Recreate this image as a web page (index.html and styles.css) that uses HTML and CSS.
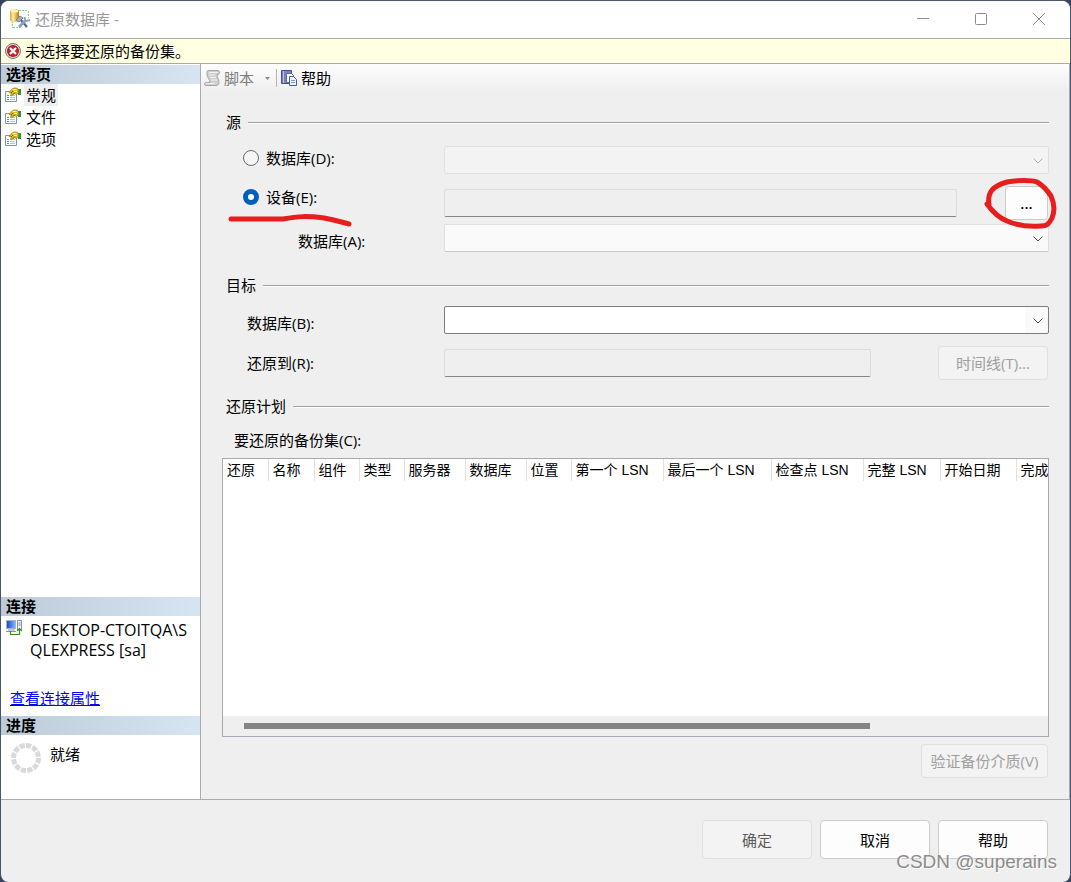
FILE: index.html
```html
<!DOCTYPE html>
<html lang="zh-CN">
<head>
<meta charset="utf-8">
<meta name="viewport" content="width=device-width, initial-scale=1">
<title>还原数据库 -</title>
<link rel="stylesheet" href="styles.css">
</head>
<body>
<svg class="defs" aria-hidden="true">
  <linearGradient id="gold" x1="0" x2="1"><stop offset="0" stop-color="#dca32a"/><stop offset=".35" stop-color="#fff0a4"/><stop offset="1" stop-color="#b87b08"/></linearGradient>
  <linearGradient id="screen" x1="0" x2="1"><stop offset="0" stop-color="#1546c8"/><stop offset="1" stop-color="#7db8ff"/></linearGradient>
  <radialGradient id="alarm"><stop offset="0" stop-color="#e0404a"/><stop offset="1" stop-color="#b4141e"/></radialGradient>
  <symbol id="page" viewBox="0 0 16 16">
    <path d="M.5 4.500h11v10H.5z" fill="#fafcff" stroke="#8594b0"/>
    <path d="M2 8.500h2M2 10.500h2M2 12.500h2" stroke="#5f86d0"/>
    <path d="M5 8.500h5M5 10.500h5M5 12.500h5" stroke="#b4c3de"/>
    <path d="M13 2h3v6h-3z" fill="#2f9a35"/>
    <path d="M4 5.500 7 2l2-1h3l1.500 1.500v3l-2 2-2-1-3 2.500-1-1 1-2z" fill="#e3b823" stroke="#8a6b18" stroke-width=".6"/>
    <path d="M7.500 2.500h4M9 4.500h3" stroke="#fff3ac"/>
    <path d="M6 6l2-2M8 7.500l2-2" stroke="#5f4a10" stroke-width=".8"/>
  </symbol>
</svg>
<div class="window">
  <header class="titlebar">
    <svg class="app-icon" width="22" height="20" viewBox="0 0 22 20" aria-hidden="true">
      <path d="M10 1.500h9M19.500 2v7M3.500 12v7M4 18.500h7" fill="none" stroke="#7fdc7f" stroke-dasharray="2 1"/>
      <path d="M1 2c0-2.500 9-2.500 9 0v9c0 2.500-9 2.500-9 0z" fill="url(#gold)"/>
      <ellipse cx="5.500" cy="2" rx="4" ry="1.500" fill="#fff1b0"/>
      <path d="M11 10l7 8" stroke="#5d6b84" stroke-width="2.400"/>
      <path d="M17 11l-7 7" stroke="#8da0bf" stroke-width="2.800"/>
      <path d="M7 11l4-4 3 2-4 4z" fill="#a4b1c5" stroke="#66758e" stroke-width=".8"/>
      <path d="M16 11l-.5-3M17 12l4-1" stroke="#8da0bd" stroke-width="2"/>
    </svg>
    <h1 class="title">还原数据库 -</h1>
    <div class="caption-buttons">
      <button class="caption" type="button" aria-label="最小化"><svg width="14" height="14" viewBox="0 0 14 14"><path d="M1 6.500h12"/></svg></button>
      <button class="caption" type="button" aria-label="最大化"><svg width="14" height="14" viewBox="0 0 14 14"><rect x="1.500" y="1.500" width="11" height="11" rx="1"/></svg></button>
      <button class="caption" type="button" aria-label="关闭"><svg width="14" height="14" viewBox="0 0 14 14"><path d="M1 1l12 12M13 1 1 13"/></svg></button>
    </div>
  </header>

  <div class="message" role="alert">
    <svg width="16" height="16" viewBox="0 0 16 16" aria-hidden="true">
      <circle cx="8" cy="8" r="7.500" fill="#d9d9de" stroke="#77777f"/>
      <circle cx="8" cy="8" r="6" fill="url(#alarm)"/>
      <path d="M5 5l6 6M11 5l-6 6" stroke="#fff" stroke-width="2.200"/>
    </svg>
    <span>未选择要还原的备份集。</span>
  </div>

  <div class="body">
    <aside class="sidebar">
      <h2 class="band">选择页</h2>
      <nav class="pages">
        <button class="page" type="button" aria-current="page"><svg width="16" height="16"><use href="#page"/></svg><span class="page-name current">常规</span></button>
        <button class="page" type="button"><svg width="16" height="16"><use href="#page"/></svg><span class="page-name">文件</span></button>
        <button class="page" type="button"><svg width="16" height="16"><use href="#page"/></svg><span class="page-name">选项</span></button>
      </nav>
      <h2 class="band">连接</h2>
      <div class="connection">
        <svg width="16" height="16" viewBox="0 0 16 16" aria-hidden="true">
          <rect x=".5" y=".5" width="9" height="8" fill="url(#screen)" stroke="#a9b4cc"/>
          <path d="M2 10h7M0 11.500h10" stroke="#8792a8"/>
          <rect x="11.500" y=".5" width="4" height="9" fill="#eef1f8" stroke="#8a93ac"/>
          <path d="M12.500 3h2M12.500 5h2" stroke="#7482a8"/>
          <path d="M4.500 11v3.500h9V9M11 11l2.500-2.500L16 11" fill="none" stroke="#2d9316" stroke-width="1.200"/>
        </svg>
        <p class="server">DESKTOP-CTOITQA\S<br>QLEXPRESS [sa]</p>
      </div>
      <a class="link" href="#">查看连接属性</a>
      <h2 class="band">进度</h2>
      <div class="progress">
        <svg width="30" height="30" viewBox="0 0 30 30" aria-hidden="true">
          <circle cx="15" cy="15" r="12.500" fill="none" stroke="#d9d9d9" stroke-width="5" pathLength="120" stroke-dasharray="8 2"/>
        </svg>
        <span>就绪</span>
      </div>
    </aside>

    <main class="content">
      <div class="toolbar">
        <button class="tool" type="button" disabled>
          <svg width="17" height="16" viewBox="0 0 17 16" aria-hidden="true">
            <path d="M4 .5h10c2 0 2 4 0 4h-1c0 3 2 5 2 8 0 2-1 3-3 3H2c-2 0-2-3 0-3h4c0-3-3-5-3-8 0-2 0-4 1-4z" fill="#cfcfcf" stroke="#a5a5a5"/>
            <path d="M5 2.500h9M5 5h6M6 7.500h6M7 10h6M2 13.500h9" stroke="#f0f0f0"/>
          </svg>
          <span>脚本</span>
          <svg class="caret" width="5" height="3" viewBox="0 0 5 3" aria-hidden="true"><path d="M0 0h5L2.500 3z" fill="#8a8a8a"/></svg>
        </button>
        <button class="tool tool-help" type="button">
          <svg width="16" height="16" viewBox="0 0 16 16" aria-hidden="true">
            <path d="M.5.500h10v13H.5z" fill="#7d82c4" stroke="#454a91"/>
            <path d="M2.500 1v12" stroke="#b9bce4"/>
            <path d="M5.500 3.500h5l2 2v7h-7z" fill="#fff" stroke="#5f6f92"/>
            <path d="M8.500 6.500h4l3 3v6h-7z" fill="#eef4ff" stroke="#4a6186"/>
            <path d="M10 10.500h4M10 12.500h4" stroke="#7f9cc8"/>
          </svg>
          <span>帮助</span>
        </button>
      </div>

      <form class="form" id="restore">
        <h2 class="group">源</h2>
        <div class="row row-source">
          <label class="radio"><input type="radio" name="source"><span>数据库(D):</span></label>
          <div class="combo combo-off"><select disabled aria-label="源数据库"></select><svg class="chevron" width="10" height="6" viewBox="0 0 10 6"><path d="M.5.500 5 5 9.500.500"/></svg></div>
        </div>
        <div class="row row-device">
          <label class="radio"><input type="radio" name="source" checked><span>设备(E):</span></label>
          <div class="field-line field-device">
            <input class="field" type="text" readonly aria-label="设备">
            <button class="button button-browse" type="button">...</button>
          </div>
        </div>
        <div class="row row-low">
          <label class="label label-nested" for="device-db">数据库(A):</label>
          <div class="combo combo-flat"><select id="device-db"></select><svg class="chevron" width="10" height="6" viewBox="0 0 10 6"><path d="M.5.500 5 5 9.500.500"/></svg></div>
        </div>

        <h2 class="group group-target">目标</h2>
        <div class="row row-low">
          <label class="label" for="target-db">数据库(B):</label>
          <div class="combo combo-edit"><select id="target-db"></select><svg class="chevron" width="10" height="6" viewBox="0 0 10 6"><path d="M.5.500 5 5 9.500.500"/></svg></div>
        </div>
        <div class="row row-restore">
          <label class="label" for="restore-to">还原到(R):</label>
          <div class="field-line field-restore">
            <input class="field" id="restore-to" type="text" readonly>
            <button class="button button-wide" type="button" disabled>时间线(T)...</button>
          </div>
        </div>

        <h2 class="group group-plan">还原计划</h2>
        <p class="list-label" id="sets">要还原的备份集(C):</p>
        <div class="list">
          <table class="sets" aria-labelledby="sets">
            <colgroup><col class="w45"><col class="w46"><col class="w45"><col class="w45"><col class="w61"><col class="w61"><col class="w45"><col class="w92"><col class="w108"><col class="w92"><col class="w77"><col class="w76"><col></colgroup>
            <thead><tr><th>还原</th><th>名称</th><th>组件</th><th>类型</th><th>服务器</th><th>数据库</th><th>位置</th><th>第一个 LSN</th><th>最后一个 LSN</th><th>检查点 LSN</th><th>完整 LSN</th><th>开始日期</th><th>完成</th></tr></thead>
          </table>
          <div class="scrollbar"><div class="thumb"></div></div>
        </div>
        <button class="button button-verify" type="button" disabled>验证备份介质(V)</button>
      </form>
    </main>
  </div>

  <footer class="footer">
    <button class="button button-wide button-ok" type="submit" form="restore" disabled>确定</button>
    <button class="button button-wide" type="button">取消</button>
    <button class="button button-wide" type="button">帮助</button>
  </footer>

  <svg class="mark mark-underline" width="126" height="16" viewBox="0 0 126 16" aria-hidden="true"><path d="M4 8C25 8 40 8 56 8C72 5 80 5 97 7C108 9 114 11 122 13"/></svg>
  <svg class="mark mark-circle" width="76" height="54" viewBox="0 0 76 54" aria-hidden="true"><path d="M7 28C5 15 11 9 25 5C35 3 50 3 55 5C62 9 65 13 69 19C73 28 73 34 70 41C67 47 65 49 59 49C47 50 34 48 25 44C15 40 10 34 5 27"/></svg>
  <div class="watermark">CSDN @superains</div>
</div>
</body>
</html>
```

FILE: styles.css
```css
* {
  box-sizing: border-box;
}

body {
  margin: 0;
  background: #37435c;
  color: #000;
  font: 15px/22px "Open Sans", "Noto Sans CJK SC", sans-serif;
}

h1, h2, p {
  margin: 0;
  font-size: 15px;
  font-weight: 400;
}

button, input, select {
  font: inherit;
  color: inherit;
}

.defs {
  position: absolute;
  width: 0;
  height: 0;
}

.window {
  position: relative;
  display: flex;
  flex-direction: column;
  min-height: 100vh;
  border: 1px solid #4a546b;
  border-bottom: 0;
  border-radius: 9px 9px 8px 8px;
  background: #efefef;
  overflow: hidden;
}

/* Title bar */
.titlebar {
  display: flex;
  align-items: center;
  height: 38px;
  padding: 0 2px 2px 8px;
  border-bottom: 1px solid #a9a9b1;
  background: #fff;
}

.title {
  flex: 1;
  margin-left: 4px;
  color: #979797;
}

.caption-buttons {
  display: flex;
}

.caption {
  display: flex;
  align-items: center;
  justify-content: center;
  width: 58px;
  height: 35px;
  padding: 0;
  border: 0;
  background: none;
}

.caption svg {
  fill: none;
  stroke: #8c8c8c;
}

.message {
  display: flex;
  align-items: center;
  gap: 4px;
  height: 25px;
  padding-left: 4px;
  border-bottom: 1px solid #a9a9b1;
  background: #ffffe1;
}

.body {
  flex: 1;
  display: flex;
  border-bottom: 1px solid #ababab;
}

/* Sidebar */
.sidebar {
  display: flex;
  flex-direction: column;
  width: 200px;
  padding-top: 1px;
  border-right: 1px solid #ababb3;
  background: #fff;
}

.band {
  height: 19px;
  padding-left: 5px;
  background: linear-gradient(90deg, #bdcad8, #d7e4f2);
  font-weight: 700;
  line-height: 19px;
}

.pages {
  flex: 1;
}

.page {
  display: flex;
  align-items: center;
  gap: 3px;
  height: 22px;
  padding: 0 0 0 4px;
  border: 0;
  background: none;
}

.page-name {
  padding: 0 2px;
}

.current {
  background: #efefef;
}

.connection {
  display: flex;
  gap: 8px;
  height: 71px;
  padding: 4px 0 0 5px;
}

.server {
  font-size: 16px;
  line-height: 20px;
}

.link {
  height: 29px;
  padding-left: 9px;
  color: #00f;
}

.progress {
  display: flex;
  gap: 9px;
  height: 64px;
  padding: 8px 0 0 10px;
}

/* Content */
.content {
  flex: 1;
  display: flex;
  flex-direction: column;
  min-width: 0;
  border-right: 1px solid #ababb3;
}

.toolbar {
  display: flex;
  align-items: center;
  height: 28px;
  padding-left: 3px;
  background: linear-gradient(#fdfdfd, #efefef);
}

.tool {
  display: flex;
  align-items: center;
  gap: 3px;
  padding: 0;
  border: 0;
  background: none;
}

.tool:disabled {
  color: #7d7d7d;
}

.caret {
  margin: 0 6px 0 8px;
}

.tool-help {
  gap: 4px;
  height: 18px;
  padding-left: 4px;
  border-left: 1px solid #b5b5b5;
}

.form {
  flex: 1;
  display: flex;
  flex-direction: column;
  padding: 19px 20px 21px 25px;
}

.group {
  display: flex;
  align-items: center;
  gap: 7px;
}

.group::after {
  content: "";
  flex: 1;
  height: 1px;
  background: #a0a0a0;
  box-shadow: 0 1px #fff;
}

.group-target {
  margin: 22px 0 10px;
}

.group-plan {
  margin-top: 15px;
}

.row {
  display: grid;
  grid-template-columns: 218px 1fr;
}

.row-source {
  align-items: start;
  margin: 13px 0 12px;
}

.row-source .radio {
  height: 24px;
}

.row-device {
  align-items: start;
  margin-bottom: 4px;
}

.row-low {
  align-items: end;
}

.row-restore {
  align-items: center;
  margin-top: 12px;
}

.radio {
  display: flex;
  align-items: center;
  gap: 7px;
  padding-left: 17px;
}

.radio input {
  appearance: none;
  width: 16px;
  height: 16px;
  margin: 0;
  border: 1px solid #6b6b6b;
  border-radius: 50%;
  background: #f6f6f6;
}

.radio input:checked {
  border: 5px solid #005fb8;
  background: #fff;
}

.label {
  padding-left: 21px;
}

.label-nested {
  padding-left: 72px;
}

.combo {
  position: relative;
  height: 28px;
  border: 1px solid #e0e0e0;
  border-radius: 2px;
}

.combo select {
  display: block;
  appearance: none;
  width: 100%;
  height: 100%;
  padding: 0 24px 0 4px;
  border: 0;
  background: none;
}

.chevron {
  position: absolute;
  top: 11px;
  right: 5px;
  fill: none;
  stroke: #4a4a4a;
  pointer-events: none;
}

.combo-off {
  background: #f3f3f3;
}

.combo-off .chevron {
  stroke: #b0b0b0;
}

.combo-flat {
  border-bottom-color: #c8c8c8;
  background: #fafafa;
}

.combo-edit {
  border-color: #7d7d7d;
  background: linear-gradient(#fafafa, #fafafa) right / 23px 100% no-repeat #fff;
}

.field-line {
  display: flex;
  align-items: center;
  padding-right: 1px;
}

.field-device {
  gap: 48px;
}

.field-restore {
  gap: 67px;
}

.field {
  flex: 1;
  min-width: 0;
  height: 28px;
  padding: 0 4px;
  border: 1px solid #dcdcdc;
  border-bottom-color: #858585;
  border-radius: 2px;
  background: #efefef;
}

.button {
  height: 34px;
  padding: 0;
  border: 1px solid #cbcbcb;
  border-radius: 4px;
  background: #fdfdfd;
}

.button:disabled {
  border-color: #e0e0e0;
  background: #f3f3f3;
  color: #a0a0a0;
}

.button-browse {
  width: 43px;
  font-weight: 600;
}

.button-wide {
  width: 110px;
}

.button-verify {
  align-self: flex-end;
  width: 127px;
  margin-right: 1px;
}

.list-label {
  margin: 12px 0 7px;
  padding-left: 8px;
}

.list {
  flex: 1;
  display: flex;
  flex-direction: column;
  justify-content: space-between;
  margin: 0 0 7px -4px;
  border: 1px solid #a9a9b1;
  background: #fff;
  overflow: hidden;
}

.sets {
  width: 100%;
  border-collapse: collapse;
  table-layout: fixed;
  font: 14px/22px "Liberation Sans", "Noto Sans CJK SC", sans-serif;
}

.sets th {
  height: 22px;
  padding: 0 0 0 4px;
  border-right: 1px solid #e2e2e2;
  font-weight: 400;
  text-align: left;
  white-space: nowrap;
}

.sets th:last-child {
  border-right: 0;
}

.w45 { width: 45px; }
.w46 { width: 46px; }
.w61 { width: 61px; }
.w76 { width: 76px; }
.w77 { width: 77px; }
.w92 { width: 92px; }
.w108 { width: 108px; }

.scrollbar {
  padding: 7px 178px 7px 21px;
  background: #efefef;
}

.thumb {
  height: 6px;
  background: #858585;
}

.footer {
  display: flex;
  justify-content: flex-end;
  gap: 8px;
  padding: 20px 22px 23px;
}

.footer .button {
  height: 39px;
}

.footer .button-ok {
  color: #5a5a5a;
}

/* Pen marks and watermark over the dialog */
.mark {
  position: absolute;
  fill: none;
  stroke: #e81e1e;
  stroke-width: 5;
  stroke-linecap: round;
  stroke-linejoin: round;
  pointer-events: none;
}

.mark-underline {
  top: 210px;
  left: 226px;
}

.mark-circle {
  top: 176px;
  right: 12px;
}

.watermark {
  position: absolute;
  right: 13px;
  bottom: 8px;
  color: #8c8c8c;
  font: 19px/24px "Liberation Sans", sans-serif;
  text-shadow: 1px 1px 0 #fff;
  pointer-events: none;
}
```
